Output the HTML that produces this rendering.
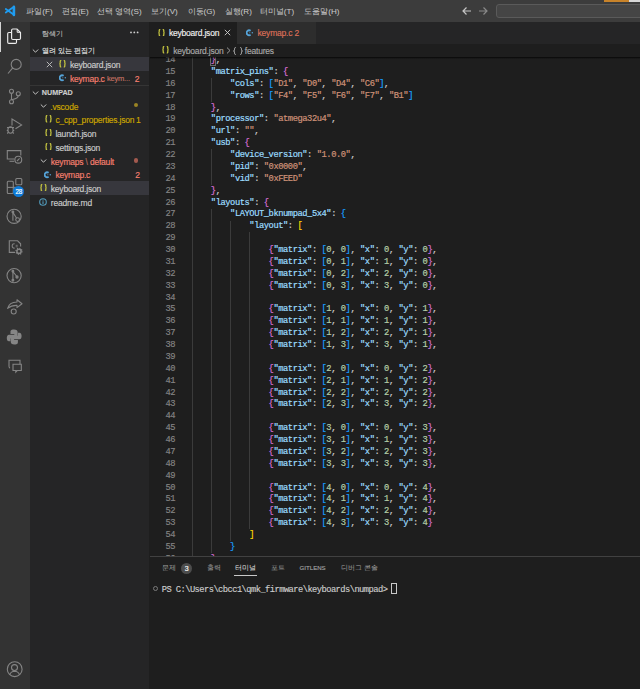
<!DOCTYPE html>
<html><head><meta charset="utf-8">
<style>
*{margin:0;padding:0;box-sizing:border-box}
html,body{width:640px;height:689px;overflow:hidden;background:#1e1e1e;font-family:"Liberation Sans",sans-serif;font-size:8px;color:#cccccc;-webkit-text-stroke-width:0.15px}
.a{position:absolute;white-space:pre}
#title{left:0;top:0;width:640px;height:22px;background:#3c3c3c}
.menu{top:0.5px;height:22px;line-height:22px;font-size:8.1px;color:#cccccc;-webkit-text-stroke-width:0}
.ko{-webkit-text-stroke-width:0}
#act{left:0;top:22px;width:30px;height:667px;background:#333333}
#side{left:30px;top:22px;width:119px;height:667px;background:#252526}
#tabs{left:150px;top:22px;width:490px;height:21.9px;background:#252526;font-size:8.5px;letter-spacing:-0.2px}
#editor{left:150px;top:56.8px;width:490px;height:499.5px;background:#1e1e1e;overflow:hidden}
.ln{position:absolute;left:0;height:11.875px;line-height:11.875px;width:490px;font-family:"Liberation Mono",monospace;font-size:8.75px;letter-spacing:-0.44px;white-space:pre}
.num{position:absolute;right:465px;top:0.8px;-webkit-text-stroke:0.15px currentColor;color:#858585;text-align:right}
.code{position:absolute;left:41.6px;top:0.8px;-webkit-text-stroke:0.2px currentColor}
.g{position:absolute;width:1px;background:#3b3b3b}
.bm{}
.row{position:absolute;left:0;width:119px;height:13.75px;line-height:16.1px;font-size:8.5px;letter-spacing:-0.2px}
.sel{background:#37373d}
#panel{left:150px;top:556.3px;width:490px;height:133px;background:#1e1e1e;border-top:1px solid #414141}
</style></head><body>
<div id="title" class="a">
  <svg class="a" style="left:0;top:0" width="22" height="22" viewBox="0 0 22 22" fill="none" stroke="#1f9cf0" stroke-linecap="round"><path d="M13.6 7 L5.8 12.5 M5.8 9 L13.6 14.6" stroke-width="1.8"/><path d="M13.9 6.9 V14.9" stroke-width="2.6"/></svg>
  <div class="a menu" style="left:26.3px">파일(F)</div>
  <div class="a menu" style="left:61.9px">편집(E)</div>
  <div class="a menu" style="left:96.6px">선택 영역(S)</div>
  <div class="a menu" style="left:151px">보기(V)</div>
  <div class="a menu" style="left:187.6px">이동(G)</div>
  <div class="a menu" style="left:224.6px">실행(R)</div>
  <div class="a menu" style="left:259.8px">터미널(T)</div>
  <div class="a menu" style="left:304.3px">도움말(H)</div>
  <svg class="a" style="left:460px;top:5px" width="30" height="12" viewBox="0 0 30 12">
    <path d="M3 6 H11 M6.5 2.5 L3 6 L6.5 9.5" stroke="#c5c5c5" stroke-width="1.2" fill="none"/>
    <path d="M19 6 H27 M23.5 2.5 L27 6 L23.5 9.5" stroke="#8a8a8a" stroke-width="1.2" fill="none"/>
  </svg>
  <div class="a" style="left:496px;top:4px;width:160px;height:14px;border:1px solid #5a5a5a;border-radius:3px;background:#454545"></div>
  <div class="a" style="left:604px;top:0;width:25px;height:1.5px;background:#c8832a"></div>
  <div class="a" style="left:629px;top:0;width:11px;height:1.5px;background:#d8d8d8"></div>
</div>

<div id="act" class="a">
  <div class="a" style="left:0;top:0;width:1.3px;height:30px;background:#d4d4d4"></div>
  <svg class="a" style="left:0;top:0" width="30" height="667" viewBox="0 22 30 667" fill="none" stroke="#858585" stroke-width="1.1">
    <!-- explorer -->
    <g stroke="#ececec" stroke-width="1.15">
      <path d="M12.8 29 H17 L20.5 32.5 V38.3 Q20.5 39.5 19.3 39.5 H12.8 Q11.6 39.5 11.6 38.3 V30.2 Q11.6 29 12.8 29 Z"/>
      <path d="M17.2 29.3 V32.3 H20.2" stroke-width="1"/>
      <path d="M11.6 32.5 H8.9 Q7.7 32.5 7.7 33.7 V42.2 Q7.7 43.4 8.9 43.4 H15.3 Q16.5 43.4 16.5 42.2 V39.5"/>
    </g>
    <!-- search -->
    <circle cx="16.2" cy="64.4" r="5"/>
    <path d="M12.7 67.9 L8 73.5"/>
    <!-- scm -->
    <circle cx="11.5" cy="91.2" r="2"/>
    <circle cx="18.3" cy="93.8" r="2"/>
    <circle cx="11.5" cy="101.7" r="2"/>
    <path d="M11.5 93.2 V99.7 M18.3 95.8 Q18.3 98.5 11.5 99.8"/>
    <!-- debug -->
    <path d="M12 125.5 V119 L21.6 124.9 L15.5 128.8"/>
    <ellipse cx="10.5" cy="130" rx="2.6" ry="3.2"/>
    <path d="M7 127.5 H14 M6.8 130.5 H8 M13 130.5 H14.2 M7.2 133.5 L8.2 132.5 M13.8 133.5 L12.8 132.5"/>
    <!-- remote -->
    <path d="M14.5 159 H7.3 V150.6 H20.8 V155.5"/>
    <path d="M9.5 161.3 H14.2"/>
    <circle cx="18.3" cy="159.7" r="3.4"/>
    <path d="M17 161 L19.6 158.4"/>
    <!-- extensions -->
    <rect x="15.8" y="178.5" width="6" height="6.2" rx="1"/>
    <rect x="7.3" y="181.3" width="6" height="12.2" rx="1"/>
    <path d="M7.3 187.4 H18"/>
    <!-- gitlens -->
    <circle cx="14.1" cy="216.3" r="7.1"/>
    <path d="M12.9 212 V220.8 M12.9 212.3 L16.6 218.2"/>
    <circle cx="12.9" cy="212" r="0.9" fill="#858585"/>
    <circle cx="17.6" cy="219.6" r="1.9"/>
    <!-- doc gear -->
    <path d="M20.6 246.5 V243.8 L17.6 240.8 H9.3 V252.4 H15"/>
    <path d="M14.6 243.7 Q12.2 243.5 12.2 245.9 Q12.2 248.3 14.6 248.1"/>
    <path d="M15.7 245.3 H17.7 M15.7 246.8 H17.7" stroke-width="0.8"/>
    <circle cx="19" cy="251.3" r="2.1" stroke-width="1.5"/>
    <circle cx="19" cy="251.3" r="3" stroke-width="1.2" stroke-dasharray="1.1 1.25"/>
    <!-- gitlens inspect -->
    <circle cx="14.1" cy="275.6" r="7.1"/>
    <path d="M12.9 271.2 V280.2 M12.9 271.5 L16.8 276.5"/>
    <circle cx="12.9" cy="271.2" r="0.9" fill="#858585"/>
    <circle cx="12.9" cy="280.3" r="0.9" fill="#858585"/>
    <circle cx="17" cy="277" r="1.1" fill="#858585"/>
    <!-- live share -->
    <path d="M7.6 308.3 Q9.2 302.2 17 302 V299.8 L22 303.8 L17 307.6 V305.4 Q11.5 305.2 7.6 308.3 Z" stroke-linejoin="round"/>
    <circle cx="13.7" cy="311.5" r="2.5"/>
    <!-- python -->
    <path d="M14 329.5 C10.5 329.5 10.5 331 10.5 332 V334 H14.3 V334.7 H9 C7.5 334.7 6.8 336 6.8 338 C6.8 340 7.5 341.3 9 341.3 H10.5 V339.5 C10.5 338.3 11.3 337.5 12.5 337.5 H16 C17 337.5 17.6 336.8 17.6 335.8 V332 C17.6 330.6 16.6 329.5 14 329.5 Z" fill="#858585" stroke="none"/>
    <path d="M14.4 344.5 C17.9 344.5 17.9 343 17.9 342 V340 H14.1 V339.3 H19.4 C20.9 339.3 21.6 338 21.6 336 C21.6 334 20.9 332.7 19.4 332.7 H17.9 V334.5 C17.9 335.7 17.1 336.5 15.9 336.5 H12.4 C11.4 336.5 10.8 337.2 10.8 338.2 V342 C10.8 343.4 11.8 344.5 14.4 344.5 Z" fill="#858585" stroke="none"/>
    <!-- chat -->
    <path d="M9 366.8 V360.3 H20 V364.3 M9 366.8 L9.8 368.3"/>
    <path d="M13 364.3 H21.3 V370.5 H17.2 L15.8 372 V370.5 H13 Z"/>
    <!-- account -->
    <circle cx="14.7" cy="669.2" r="7.4"/>
    <circle cx="14.5" cy="667.6" r="3"/>
    <path d="M9.6 674.8 Q11 671.3 14.6 671.2 Q18.2 671.3 19.6 674.8"/>
  </svg>
  <div class="a" style="left:13.1px;top:164.1px;width:11.4px;height:11.4px;border-radius:50%;background:#0e7bd8;color:#fff;font-size:6.3px;line-height:11.4px;text-align:center;letter-spacing:-0.2px">28</div>
</div>

<div id="side" class="a">
  <div class="a" style="left:11.8px;top:0.8px;height:22px;line-height:22px;font-size:7.4px;color:#c0c0c0;-webkit-text-stroke-width:0.1px">탐색기</div>
  <svg class="a" style="left:96px;top:8px" width="14" height="5" viewBox="126 30 14 5" fill="#d0d0d0"><circle cx="131" cy="32.4" r="0.9"/><circle cx="134.3" cy="32.4" r="0.9"/><circle cx="137.6" cy="32.4" r="0.9"/></svg>
  <div class="row" style="top:21.50px;font-weight:bold;color:#cccccc;letter-spacing:0;line-height:15px"><svg class="a" style="left:2px;top:4.10px" width="7" height="6" viewBox="0 0 7 6"><path d="M0.8 1.5 L3.5 4.2 L6.2 1.5" stroke="#c5c5c5" fill="none" stroke-width="1"/></svg><span class="a ko" style="left:11.8px;font-size:7.1px">열려 있는 편집기</span></div>
  <div class="row sel" style="top:35.25px"><svg class="a" style="left:16.1px;top:3.90px" width="7" height="7" viewBox="0 0 7 7" fill="none" stroke="#c5c5c5" stroke-width="0.9"><path d="M0.8 0.8 L6.2 6.2 M6.2 0.8 L0.8 6.2"/></svg><svg class="a" style="left:28.7px;top:2.75px" width="7" height="7.5" viewBox="0 0 7 7.5" fill="none" stroke="#cbcb41" stroke-width="1.2"><path d="M2.3 0.5 Q1.2 0.5 1.2 1.6 V2.7 Q1.2 3.75 0.4 3.75 Q1.2 3.75 1.2 4.8 V5.9 Q1.2 7 2.3 7 M4.7 0.5 Q5.8 0.5 5.8 1.6 V2.7 Q5.8 3.75 6.6 3.75 Q5.8 3.75 5.8 4.8 V5.9 Q5.8 7 4.7 7"/></svg><span class="a" style="left:39.9px;color:#cccccc">keyboard.json</span></div>
  <div class="row" style="top:49.00px"><svg class="a" style="left:28.8px;top:2.9px" width="8" height="8" viewBox="0 0 8 8" fill="#55a3d8" stroke="#55a3d8"><path d="M4.63 1.75 A2.5 2.5 0 1 0 4.63 5.85" stroke-width="1.8" fill="none"/><circle cx="3.8" cy="3.8" r="0.5" stroke="none"/><circle cx="6.3" cy="3.8" r="0.7" stroke="none"/></svg><span class="a" style="left:39.9px;color:#f88070">keymap.c</span><span class="a" style="left:77px;color:#c17163;font-size:7.5px">keym...</span><span class="a" style="left:104.7px;color:#f88070">2</span></div>
  <div class="row" style="top:62.75px;font-weight:bold;letter-spacing:0;line-height:14.8px;border-top:1px solid #353535"><svg class="a" style="left:2px;top:4.10px" width="7" height="6" viewBox="0 0 7 6"><path d="M0.8 1.5 L3.5 4.2 L6.2 1.5" stroke="#c5c5c5" fill="none" stroke-width="1"/></svg><span class="a" style="left:11.8px;color:#cccccc;font-size:7.2px">NUMPAD</span></div>
  <div class="row" style="top:76.50px"><svg class="a" style="left:10px;top:4.10px" width="7" height="6" viewBox="0 0 7 6"><path d="M0.8 1.5 L3.5 4.2 L6.2 1.5" stroke="#c5c5c5" fill="none" stroke-width="1"/></svg><span class="a" style="left:20.3px;color:#cca700">.vscode</span><span class="a" style="left:103.6px;top:4.30px;width:4.6px;height:4.6px;border-radius:50%;background:#9a8424"></span></div>
  <div class="row" style="top:90.25px"><svg class="a" style="left:14.8px;top:2.75px" width="7" height="7.5" viewBox="0 0 7 7.5" fill="none" stroke="#cbcb41" stroke-width="1.2"><path d="M2.3 0.5 Q1.2 0.5 1.2 1.6 V2.7 Q1.2 3.75 0.4 3.75 Q1.2 3.75 1.2 4.8 V5.9 Q1.2 7 2.3 7 M4.7 0.5 Q5.8 0.5 5.8 1.6 V2.7 Q5.8 3.75 6.6 3.75 Q5.8 3.75 5.8 4.8 V5.9 Q5.8 7 4.7 7"/></svg><span class="a" style="left:25.4px;color:#cca700">c_cpp_properties.json</span><span class="a" style="left:106px;color:#cca700">1</span></div>
  <div class="row" style="top:104.00px"><svg class="a" style="left:14.8px;top:2.75px" width="7" height="7.5" viewBox="0 0 7 7.5" fill="none" stroke="#cbcb41" stroke-width="1.2"><path d="M2.3 0.5 Q1.2 0.5 1.2 1.6 V2.7 Q1.2 3.75 0.4 3.75 Q1.2 3.75 1.2 4.8 V5.9 Q1.2 7 2.3 7 M4.7 0.5 Q5.8 0.5 5.8 1.6 V2.7 Q5.8 3.75 6.6 3.75 Q5.8 3.75 5.8 4.8 V5.9 Q5.8 7 4.7 7"/></svg><span class="a" style="left:25.4px;color:#cccccc">launch.json</span></div>
  <div class="row" style="top:117.75px"><svg class="a" style="left:14.8px;top:2.75px" width="7" height="7.5" viewBox="0 0 7 7.5" fill="none" stroke="#cbcb41" stroke-width="1.2"><path d="M2.3 0.5 Q1.2 0.5 1.2 1.6 V2.7 Q1.2 3.75 0.4 3.75 Q1.2 3.75 1.2 4.8 V5.9 Q1.2 7 2.3 7 M4.7 0.5 Q5.8 0.5 5.8 1.6 V2.7 Q5.8 3.75 6.6 3.75 Q5.8 3.75 5.8 4.8 V5.9 Q5.8 7 4.7 7"/></svg><span class="a" style="left:25.4px;color:#cccccc">settings.json</span></div>
  <div class="row" style="top:131.50px"><svg class="a" style="left:10px;top:4.10px" width="7" height="6" viewBox="0 0 7 6"><path d="M0.8 1.5 L3.5 4.2 L6.2 1.5" stroke="#c5c5c5" fill="none" stroke-width="1"/></svg><span class="a" style="left:20.75px;color:#f88070">keymaps<span style="color:#b86b60"> \ </span>default</span><span class="a" style="left:103.6px;top:4.50px;width:4.6px;height:4.6px;border-radius:50%;background:#a35a4f"></span></div>
  <div class="row" style="top:145.25px"><svg class="a" style="left:14.4px;top:3.65px" width="8" height="8" viewBox="0 0 8 8" fill="#55a3d8" stroke="#55a3d8"><path d="M4.63 1.75 A2.5 2.5 0 1 0 4.63 5.85" stroke-width="1.8" fill="none"/><circle cx="3.8" cy="3.8" r="0.5" stroke="none"/><circle cx="6.3" cy="3.8" r="0.7" stroke="none"/></svg><span class="a" style="left:25.4px;color:#f88070">keymap.c</span><span class="a" style="left:105.2px;color:#f88070">2</span></div>
  <div class="row sel" style="top:159.00px"><svg class="a" style="left:9.5px;top:2.75px" width="7" height="7.5" viewBox="0 0 7 7.5" fill="none" stroke="#cbcb41" stroke-width="1.2"><path d="M2.3 0.5 Q1.2 0.5 1.2 1.6 V2.7 Q1.2 3.75 0.4 3.75 Q1.2 3.75 1.2 4.8 V5.9 Q1.2 7 2.3 7 M4.7 0.5 Q5.8 0.5 5.8 1.6 V2.7 Q5.8 3.75 6.6 3.75 Q5.8 3.75 5.8 4.8 V5.9 Q5.8 7 4.7 7"/></svg><span class="a" style="left:20.75px;color:#cccccc">keyboard.json</span></div>
  <div class="row" style="top:172.75px"><svg class="a" style="left:8.5px;top:3.50px" width="8" height="8" viewBox="0 0 8 8"><circle cx="4" cy="4" r="3.3" fill="none" stroke="#519aba" stroke-width="1.1"/><path d="M4 3.3 V6" stroke="#519aba" stroke-width="1.1"/><circle cx="4" cy="2.1" r="0.6" fill="#519aba"/></svg><span class="a" style="left:20.75px;color:#cccccc">readme.md</span></div>
</div>

<div id="tabs" class="a">
  <div class="a" style="left:0;top:0;width:87px;height:21.9px;background:#1e1e1e"></div>
  <div class="a" style="left:87px;top:0;width:78.6px;height:21.9px;background:#2d2d2d"></div>
  <svg class="a" style="left:7.8px;top:6.7px" width="7" height="7.5" viewBox="0 0 7 7.5" fill="none" stroke="#cbcb41" stroke-width="1.2"><path d="M2.3 0.5 Q1.2 0.5 1.2 1.6 V2.7 Q1.2 3.75 0.4 3.75 Q1.2 3.75 1.2 4.8 V5.9 Q1.2 7 2.3 7 M4.7 0.5 Q5.8 0.5 5.8 1.6 V2.7 Q5.8 3.75 6.6 3.75 Q5.8 3.75 5.8 4.8 V5.9 Q5.8 7 4.7 7"/></svg>
  <span class="a" style="left:18.9px;top:0.7px;line-height:21.9px;color:#f0f0f0">keyboard.json</span>
  <svg class="a" style="left:74.3px;top:7.2px" width="7" height="7" viewBox="0 0 7 7" fill="none" stroke="#d0d0d0" stroke-width="0.9"><path d="M0.8 0.8 L6.2 6.2 M6.2 0.8 L0.8 6.2"/></svg>
  <svg class="a" style="left:96.1px;top:6.6px" width="8" height="8" viewBox="0 0 8 8" fill="#55a3d8" stroke="#55a3d8"><path d="M4.63 1.75 A2.5 2.5 0 1 0 4.63 5.85" stroke-width="1.8" fill="none"/><circle cx="3.8" cy="3.8" r="0.5" stroke="none"/><circle cx="6.3" cy="3.8" r="0.7" stroke="none"/></svg>
  <span class="a" style="left:107.5px;top:0.7px;line-height:21.9px;color:#dd7059">keymap.c 2</span>
</div>
<div class="a" style="left:150px;top:43.9px;width:490px;height:12.9px;background:#1e1e1e;font-size:8.5px;letter-spacing:-0.2px">
  <svg class="a" style="left:11.6px;top:2.3px" width="7" height="7.5" viewBox="0 0 7 7.5" fill="none" stroke="#cbcb41" stroke-width="1.2"><path d="M2.3 0.5 Q1.2 0.5 1.2 1.6 V2.7 Q1.2 3.75 0.4 3.75 Q1.2 3.75 1.2 4.8 V5.9 Q1.2 7 2.3 7 M4.7 0.5 Q5.8 0.5 5.8 1.6 V2.7 Q5.8 3.75 6.6 3.75 Q5.8 3.75 5.8 4.8 V5.9 Q5.8 7 4.7 7"/></svg>
  <span class="a" style="left:23.2px;top:1px;line-height:12.9px;color:#a9a9a9">keyboard.json</span>
  <svg class="a" style="left:76.3px;top:3.6px" width="5" height="7" viewBox="0 0 5 7"><path d="M1 0.6 L4 3.5 L1 6.4" fill="none" stroke="#a9a9a9" stroke-width="0.9"/></svg>
  <svg class="a" style="left:83.3px;top:2.7px" width="10" height="8" viewBox="0 0 10 8" fill="none" stroke="#b5b5b5" stroke-width="0.9"><path d="M2.8 0.5 Q1.5 0.5 1.5 1.8 V2.9 Q1.5 4 0.5 4 Q1.5 4 1.5 5.1 V6.2 Q1.5 7.5 2.8 7.5 M7.2 0.5 Q8.5 0.5 8.5 1.8 V2.9 Q8.5 4 9.5 4 Q8.5 4 8.5 5.1 V6.2 Q8.5 7.5 7.2 7.5"/></svg>
  <span class="a" style="left:94.8px;top:1px;line-height:12.9px;color:#a9a9a9">features</span>
</div>

<div id="editor" class="a">
<div class="g" style="left:41.60px;top:-14.38px;height:534.38px"></div>
<div class="g" style="left:60.84px;top:21.25px;height:23.75px"></div>
<div class="g" style="left:60.84px;top:92.50px;height:35.62px"></div>
<div class="g" style="left:60.84px;top:151.88px;height:344.37px"></div>
<div class="g" style="left:60.84px;top:-50.00px;height:47.50px"></div>
<div class="g" style="left:80.08px;top:163.75px;height:320.62px"></div>
<div class="g" style="left:99.32px;top:175.62px;height:296.87px"></div>
<div class="ln" style="top:-2.500px"><span class="num">14</span><span class="code">    <span class="bm"><span style="color:#da70d6">}</span></span><span style="color:#cccccc">,</span></span></div>
<div class="ln" style="top:9.375px"><span class="num">15</span><span class="code">    <span style="color:#9cdcfe">&quot;matrix_pins&quot;</span><span style="color:#cccccc">: </span><span style="color:#da70d6">{</span></span></div>
<div class="ln" style="top:21.250px"><span class="num">16</span><span class="code">        <span style="color:#9cdcfe">&quot;cols&quot;</span><span style="color:#cccccc">: </span><span style="color:#179fff">[</span><span style="color:#ce9178">&quot;D1&quot;</span><span style="color:#cccccc">, </span><span style="color:#ce9178">&quot;D0&quot;</span><span style="color:#cccccc">, </span><span style="color:#ce9178">&quot;D4&quot;</span><span style="color:#cccccc">, </span><span style="color:#ce9178">&quot;C6&quot;</span><span style="color:#179fff">]</span><span style="color:#cccccc">,</span></span></div>
<div class="ln" style="top:33.125px"><span class="num">17</span><span class="code">        <span style="color:#9cdcfe">&quot;rows&quot;</span><span style="color:#cccccc">: </span><span style="color:#179fff">[</span><span style="color:#ce9178">&quot;F4&quot;</span><span style="color:#cccccc">, </span><span style="color:#ce9178">&quot;F5&quot;</span><span style="color:#cccccc">, </span><span style="color:#ce9178">&quot;F6&quot;</span><span style="color:#cccccc">, </span><span style="color:#ce9178">&quot;F7&quot;</span><span style="color:#cccccc">, </span><span style="color:#ce9178">&quot;B1&quot;</span><span style="color:#179fff">]</span></span></div>
<div class="ln" style="top:45.000px"><span class="num">18</span><span class="code">    <span style="color:#da70d6">}</span><span style="color:#cccccc">,</span></span></div>
<div class="ln" style="top:56.875px"><span class="num">19</span><span class="code">    <span style="color:#9cdcfe">&quot;processor&quot;</span><span style="color:#cccccc">: </span><span style="color:#ce9178">&quot;atmega32u4&quot;</span><span style="color:#cccccc">,</span></span></div>
<div class="ln" style="top:68.750px"><span class="num">20</span><span class="code">    <span style="color:#9cdcfe">&quot;url&quot;</span><span style="color:#cccccc">: </span><span style="color:#ce9178">&quot;&quot;</span><span style="color:#cccccc">,</span></span></div>
<div class="ln" style="top:80.625px"><span class="num">21</span><span class="code">    <span style="color:#9cdcfe">&quot;usb&quot;</span><span style="color:#cccccc">: </span><span style="color:#da70d6">{</span></span></div>
<div class="ln" style="top:92.500px"><span class="num">22</span><span class="code">        <span style="color:#9cdcfe">&quot;device_version&quot;</span><span style="color:#cccccc">: </span><span style="color:#ce9178">&quot;1.0.0&quot;</span><span style="color:#cccccc">,</span></span></div>
<div class="ln" style="top:104.375px"><span class="num">23</span><span class="code">        <span style="color:#9cdcfe">&quot;pid&quot;</span><span style="color:#cccccc">: </span><span style="color:#ce9178">&quot;0x0000&quot;</span><span style="color:#cccccc">,</span></span></div>
<div class="ln" style="top:116.250px"><span class="num">24</span><span class="code">        <span style="color:#9cdcfe">&quot;vid&quot;</span><span style="color:#cccccc">: </span><span style="color:#ce9178">&quot;0xFEED&quot;</span></span></div>
<div class="ln" style="top:128.125px"><span class="num">25</span><span class="code">    <span style="color:#da70d6">}</span><span style="color:#cccccc">,</span></span></div>
<div class="ln" style="top:140.000px"><span class="num">26</span><span class="code">    <span style="color:#9cdcfe">&quot;layouts&quot;</span><span style="color:#cccccc">: </span><span style="color:#da70d6">{</span></span></div>
<div class="ln" style="top:151.875px"><span class="num">27</span><span class="code">        <span style="color:#9cdcfe">&quot;LAYOUT_bknumpad_5x4&quot;</span><span style="color:#cccccc">: </span><span style="color:#179fff">{</span></span></div>
<div class="ln" style="top:163.750px"><span class="num">28</span><span class="code">            <span style="color:#9cdcfe">&quot;layout&quot;</span><span style="color:#cccccc">: </span><span style="color:#ffd700">[</span></span></div>
<div class="ln" style="top:175.625px"><span class="num">29</span><span class="code"></span></div>
<div class="ln" style="top:187.500px"><span class="num">30</span><span class="code">                <span style="color:#da70d6">{</span><span style="color:#9cdcfe">&quot;matrix&quot;</span><span style="color:#cccccc">: </span><span style="color:#179fff">[</span><span style="color:#b5cea8">0</span><span style="color:#cccccc">, </span><span style="color:#b5cea8">0</span><span style="color:#179fff">]</span><span style="color:#cccccc">, </span><span style="color:#9cdcfe">&quot;x&quot;</span><span style="color:#cccccc">: </span><span style="color:#b5cea8">0</span><span style="color:#cccccc">, </span><span style="color:#9cdcfe">&quot;y&quot;</span><span style="color:#cccccc">: </span><span style="color:#b5cea8">0</span><span style="color:#da70d6">}</span><span style="color:#cccccc">,</span></span></div>
<div class="ln" style="top:199.375px"><span class="num">31</span><span class="code">                <span style="color:#da70d6">{</span><span style="color:#9cdcfe">&quot;matrix&quot;</span><span style="color:#cccccc">: </span><span style="color:#179fff">[</span><span style="color:#b5cea8">0</span><span style="color:#cccccc">, </span><span style="color:#b5cea8">1</span><span style="color:#179fff">]</span><span style="color:#cccccc">, </span><span style="color:#9cdcfe">&quot;x&quot;</span><span style="color:#cccccc">: </span><span style="color:#b5cea8">1</span><span style="color:#cccccc">, </span><span style="color:#9cdcfe">&quot;y&quot;</span><span style="color:#cccccc">: </span><span style="color:#b5cea8">0</span><span style="color:#da70d6">}</span><span style="color:#cccccc">,</span></span></div>
<div class="ln" style="top:211.250px"><span class="num">32</span><span class="code">                <span style="color:#da70d6">{</span><span style="color:#9cdcfe">&quot;matrix&quot;</span><span style="color:#cccccc">: </span><span style="color:#179fff">[</span><span style="color:#b5cea8">0</span><span style="color:#cccccc">, </span><span style="color:#b5cea8">2</span><span style="color:#179fff">]</span><span style="color:#cccccc">, </span><span style="color:#9cdcfe">&quot;x&quot;</span><span style="color:#cccccc">: </span><span style="color:#b5cea8">2</span><span style="color:#cccccc">, </span><span style="color:#9cdcfe">&quot;y&quot;</span><span style="color:#cccccc">: </span><span style="color:#b5cea8">0</span><span style="color:#da70d6">}</span><span style="color:#cccccc">,</span></span></div>
<div class="ln" style="top:223.125px"><span class="num">33</span><span class="code">                <span style="color:#da70d6">{</span><span style="color:#9cdcfe">&quot;matrix&quot;</span><span style="color:#cccccc">: </span><span style="color:#179fff">[</span><span style="color:#b5cea8">0</span><span style="color:#cccccc">, </span><span style="color:#b5cea8">3</span><span style="color:#179fff">]</span><span style="color:#cccccc">, </span><span style="color:#9cdcfe">&quot;x&quot;</span><span style="color:#cccccc">: </span><span style="color:#b5cea8">3</span><span style="color:#cccccc">, </span><span style="color:#9cdcfe">&quot;y&quot;</span><span style="color:#cccccc">: </span><span style="color:#b5cea8">0</span><span style="color:#da70d6">}</span><span style="color:#cccccc">,</span></span></div>
<div class="ln" style="top:235.000px"><span class="num">34</span><span class="code"></span></div>
<div class="ln" style="top:246.875px"><span class="num">35</span><span class="code">                <span style="color:#da70d6">{</span><span style="color:#9cdcfe">&quot;matrix&quot;</span><span style="color:#cccccc">: </span><span style="color:#179fff">[</span><span style="color:#b5cea8">1</span><span style="color:#cccccc">, </span><span style="color:#b5cea8">0</span><span style="color:#179fff">]</span><span style="color:#cccccc">, </span><span style="color:#9cdcfe">&quot;x&quot;</span><span style="color:#cccccc">: </span><span style="color:#b5cea8">0</span><span style="color:#cccccc">, </span><span style="color:#9cdcfe">&quot;y&quot;</span><span style="color:#cccccc">: </span><span style="color:#b5cea8">1</span><span style="color:#da70d6">}</span><span style="color:#cccccc">,</span></span></div>
<div class="ln" style="top:258.750px"><span class="num">36</span><span class="code">                <span style="color:#da70d6">{</span><span style="color:#9cdcfe">&quot;matrix&quot;</span><span style="color:#cccccc">: </span><span style="color:#179fff">[</span><span style="color:#b5cea8">1</span><span style="color:#cccccc">, </span><span style="color:#b5cea8">1</span><span style="color:#179fff">]</span><span style="color:#cccccc">, </span><span style="color:#9cdcfe">&quot;x&quot;</span><span style="color:#cccccc">: </span><span style="color:#b5cea8">1</span><span style="color:#cccccc">, </span><span style="color:#9cdcfe">&quot;y&quot;</span><span style="color:#cccccc">: </span><span style="color:#b5cea8">1</span><span style="color:#da70d6">}</span><span style="color:#cccccc">,</span></span></div>
<div class="ln" style="top:270.625px"><span class="num">37</span><span class="code">                <span style="color:#da70d6">{</span><span style="color:#9cdcfe">&quot;matrix&quot;</span><span style="color:#cccccc">: </span><span style="color:#179fff">[</span><span style="color:#b5cea8">1</span><span style="color:#cccccc">, </span><span style="color:#b5cea8">2</span><span style="color:#179fff">]</span><span style="color:#cccccc">, </span><span style="color:#9cdcfe">&quot;x&quot;</span><span style="color:#cccccc">: </span><span style="color:#b5cea8">2</span><span style="color:#cccccc">, </span><span style="color:#9cdcfe">&quot;y&quot;</span><span style="color:#cccccc">: </span><span style="color:#b5cea8">1</span><span style="color:#da70d6">}</span><span style="color:#cccccc">,</span></span></div>
<div class="ln" style="top:282.500px"><span class="num">38</span><span class="code">                <span style="color:#da70d6">{</span><span style="color:#9cdcfe">&quot;matrix&quot;</span><span style="color:#cccccc">: </span><span style="color:#179fff">[</span><span style="color:#b5cea8">1</span><span style="color:#cccccc">, </span><span style="color:#b5cea8">3</span><span style="color:#179fff">]</span><span style="color:#cccccc">, </span><span style="color:#9cdcfe">&quot;x&quot;</span><span style="color:#cccccc">: </span><span style="color:#b5cea8">3</span><span style="color:#cccccc">, </span><span style="color:#9cdcfe">&quot;y&quot;</span><span style="color:#cccccc">: </span><span style="color:#b5cea8">1</span><span style="color:#da70d6">}</span><span style="color:#cccccc">,</span></span></div>
<div class="ln" style="top:294.375px"><span class="num">39</span><span class="code"></span></div>
<div class="ln" style="top:306.250px"><span class="num">40</span><span class="code">                <span style="color:#da70d6">{</span><span style="color:#9cdcfe">&quot;matrix&quot;</span><span style="color:#cccccc">: </span><span style="color:#179fff">[</span><span style="color:#b5cea8">2</span><span style="color:#cccccc">, </span><span style="color:#b5cea8">0</span><span style="color:#179fff">]</span><span style="color:#cccccc">, </span><span style="color:#9cdcfe">&quot;x&quot;</span><span style="color:#cccccc">: </span><span style="color:#b5cea8">0</span><span style="color:#cccccc">, </span><span style="color:#9cdcfe">&quot;y&quot;</span><span style="color:#cccccc">: </span><span style="color:#b5cea8">2</span><span style="color:#da70d6">}</span><span style="color:#cccccc">,</span></span></div>
<div class="ln" style="top:318.125px"><span class="num">41</span><span class="code">                <span style="color:#da70d6">{</span><span style="color:#9cdcfe">&quot;matrix&quot;</span><span style="color:#cccccc">: </span><span style="color:#179fff">[</span><span style="color:#b5cea8">2</span><span style="color:#cccccc">, </span><span style="color:#b5cea8">1</span><span style="color:#179fff">]</span><span style="color:#cccccc">, </span><span style="color:#9cdcfe">&quot;x&quot;</span><span style="color:#cccccc">: </span><span style="color:#b5cea8">1</span><span style="color:#cccccc">, </span><span style="color:#9cdcfe">&quot;y&quot;</span><span style="color:#cccccc">: </span><span style="color:#b5cea8">2</span><span style="color:#da70d6">}</span><span style="color:#cccccc">,</span></span></div>
<div class="ln" style="top:330.000px"><span class="num">42</span><span class="code">                <span style="color:#da70d6">{</span><span style="color:#9cdcfe">&quot;matrix&quot;</span><span style="color:#cccccc">: </span><span style="color:#179fff">[</span><span style="color:#b5cea8">2</span><span style="color:#cccccc">, </span><span style="color:#b5cea8">2</span><span style="color:#179fff">]</span><span style="color:#cccccc">, </span><span style="color:#9cdcfe">&quot;x&quot;</span><span style="color:#cccccc">: </span><span style="color:#b5cea8">2</span><span style="color:#cccccc">, </span><span style="color:#9cdcfe">&quot;y&quot;</span><span style="color:#cccccc">: </span><span style="color:#b5cea8">2</span><span style="color:#da70d6">}</span><span style="color:#cccccc">,</span></span></div>
<div class="ln" style="top:341.875px"><span class="num">43</span><span class="code">                <span style="color:#da70d6">{</span><span style="color:#9cdcfe">&quot;matrix&quot;</span><span style="color:#cccccc">: </span><span style="color:#179fff">[</span><span style="color:#b5cea8">2</span><span style="color:#cccccc">, </span><span style="color:#b5cea8">3</span><span style="color:#179fff">]</span><span style="color:#cccccc">, </span><span style="color:#9cdcfe">&quot;x&quot;</span><span style="color:#cccccc">: </span><span style="color:#b5cea8">3</span><span style="color:#cccccc">, </span><span style="color:#9cdcfe">&quot;y&quot;</span><span style="color:#cccccc">: </span><span style="color:#b5cea8">2</span><span style="color:#da70d6">}</span><span style="color:#cccccc">,</span></span></div>
<div class="ln" style="top:353.750px"><span class="num">44</span><span class="code"></span></div>
<div class="ln" style="top:365.625px"><span class="num">45</span><span class="code">                <span style="color:#da70d6">{</span><span style="color:#9cdcfe">&quot;matrix&quot;</span><span style="color:#cccccc">: </span><span style="color:#179fff">[</span><span style="color:#b5cea8">3</span><span style="color:#cccccc">, </span><span style="color:#b5cea8">0</span><span style="color:#179fff">]</span><span style="color:#cccccc">, </span><span style="color:#9cdcfe">&quot;x&quot;</span><span style="color:#cccccc">: </span><span style="color:#b5cea8">0</span><span style="color:#cccccc">, </span><span style="color:#9cdcfe">&quot;y&quot;</span><span style="color:#cccccc">: </span><span style="color:#b5cea8">3</span><span style="color:#da70d6">}</span><span style="color:#cccccc">,</span></span></div>
<div class="ln" style="top:377.500px"><span class="num">46</span><span class="code">                <span style="color:#da70d6">{</span><span style="color:#9cdcfe">&quot;matrix&quot;</span><span style="color:#cccccc">: </span><span style="color:#179fff">[</span><span style="color:#b5cea8">3</span><span style="color:#cccccc">, </span><span style="color:#b5cea8">1</span><span style="color:#179fff">]</span><span style="color:#cccccc">, </span><span style="color:#9cdcfe">&quot;x&quot;</span><span style="color:#cccccc">: </span><span style="color:#b5cea8">1</span><span style="color:#cccccc">, </span><span style="color:#9cdcfe">&quot;y&quot;</span><span style="color:#cccccc">: </span><span style="color:#b5cea8">3</span><span style="color:#da70d6">}</span><span style="color:#cccccc">,</span></span></div>
<div class="ln" style="top:389.375px"><span class="num">47</span><span class="code">                <span style="color:#da70d6">{</span><span style="color:#9cdcfe">&quot;matrix&quot;</span><span style="color:#cccccc">: </span><span style="color:#179fff">[</span><span style="color:#b5cea8">3</span><span style="color:#cccccc">, </span><span style="color:#b5cea8">2</span><span style="color:#179fff">]</span><span style="color:#cccccc">, </span><span style="color:#9cdcfe">&quot;x&quot;</span><span style="color:#cccccc">: </span><span style="color:#b5cea8">2</span><span style="color:#cccccc">, </span><span style="color:#9cdcfe">&quot;y&quot;</span><span style="color:#cccccc">: </span><span style="color:#b5cea8">3</span><span style="color:#da70d6">}</span><span style="color:#cccccc">,</span></span></div>
<div class="ln" style="top:401.250px"><span class="num">48</span><span class="code">                <span style="color:#da70d6">{</span><span style="color:#9cdcfe">&quot;matrix&quot;</span><span style="color:#cccccc">: </span><span style="color:#179fff">[</span><span style="color:#b5cea8">3</span><span style="color:#cccccc">, </span><span style="color:#b5cea8">3</span><span style="color:#179fff">]</span><span style="color:#cccccc">, </span><span style="color:#9cdcfe">&quot;x&quot;</span><span style="color:#cccccc">: </span><span style="color:#b5cea8">3</span><span style="color:#cccccc">, </span><span style="color:#9cdcfe">&quot;y&quot;</span><span style="color:#cccccc">: </span><span style="color:#b5cea8">3</span><span style="color:#da70d6">}</span><span style="color:#cccccc">,</span></span></div>
<div class="ln" style="top:413.125px"><span class="num">49</span><span class="code"></span></div>
<div class="ln" style="top:425.000px"><span class="num">50</span><span class="code">                <span style="color:#da70d6">{</span><span style="color:#9cdcfe">&quot;matrix&quot;</span><span style="color:#cccccc">: </span><span style="color:#179fff">[</span><span style="color:#b5cea8">4</span><span style="color:#cccccc">, </span><span style="color:#b5cea8">0</span><span style="color:#179fff">]</span><span style="color:#cccccc">, </span><span style="color:#9cdcfe">&quot;x&quot;</span><span style="color:#cccccc">: </span><span style="color:#b5cea8">0</span><span style="color:#cccccc">, </span><span style="color:#9cdcfe">&quot;y&quot;</span><span style="color:#cccccc">: </span><span style="color:#b5cea8">4</span><span style="color:#da70d6">}</span><span style="color:#cccccc">,</span></span></div>
<div class="ln" style="top:436.875px"><span class="num">51</span><span class="code">                <span style="color:#da70d6">{</span><span style="color:#9cdcfe">&quot;matrix&quot;</span><span style="color:#cccccc">: </span><span style="color:#179fff">[</span><span style="color:#b5cea8">4</span><span style="color:#cccccc">, </span><span style="color:#b5cea8">1</span><span style="color:#179fff">]</span><span style="color:#cccccc">, </span><span style="color:#9cdcfe">&quot;x&quot;</span><span style="color:#cccccc">: </span><span style="color:#b5cea8">1</span><span style="color:#cccccc">, </span><span style="color:#9cdcfe">&quot;y&quot;</span><span style="color:#cccccc">: </span><span style="color:#b5cea8">4</span><span style="color:#da70d6">}</span><span style="color:#cccccc">,</span></span></div>
<div class="ln" style="top:448.750px"><span class="num">52</span><span class="code">                <span style="color:#da70d6">{</span><span style="color:#9cdcfe">&quot;matrix&quot;</span><span style="color:#cccccc">: </span><span style="color:#179fff">[</span><span style="color:#b5cea8">4</span><span style="color:#cccccc">, </span><span style="color:#b5cea8">2</span><span style="color:#179fff">]</span><span style="color:#cccccc">, </span><span style="color:#9cdcfe">&quot;x&quot;</span><span style="color:#cccccc">: </span><span style="color:#b5cea8">2</span><span style="color:#cccccc">, </span><span style="color:#9cdcfe">&quot;y&quot;</span><span style="color:#cccccc">: </span><span style="color:#b5cea8">4</span><span style="color:#da70d6">}</span><span style="color:#cccccc">,</span></span></div>
<div class="ln" style="top:460.625px"><span class="num">53</span><span class="code">                <span style="color:#da70d6">{</span><span style="color:#9cdcfe">&quot;matrix&quot;</span><span style="color:#cccccc">: </span><span style="color:#179fff">[</span><span style="color:#b5cea8">4</span><span style="color:#cccccc">, </span><span style="color:#b5cea8">3</span><span style="color:#179fff">]</span><span style="color:#cccccc">, </span><span style="color:#9cdcfe">&quot;x&quot;</span><span style="color:#cccccc">: </span><span style="color:#b5cea8">3</span><span style="color:#cccccc">, </span><span style="color:#9cdcfe">&quot;y&quot;</span><span style="color:#cccccc">: </span><span style="color:#b5cea8">4</span><span style="color:#da70d6">}</span></span></div>
<div class="ln" style="top:472.500px"><span class="num">54</span><span class="code">            <span style="color:#ffd700">]</span></span></div>
<div class="ln" style="top:484.375px"><span class="num">55</span><span class="code">        <span style="color:#179fff">}</span></span></div>
<div class="ln" style="top:496.250px"><span class="num">56</span><span class="code">    <span style="color:#da70d6">}</span></span></div>
<div class="a" style="left:60.3px;top:-2.5px;width:5.6px;height:11.9px;border:1px solid #6a6a6a"></div>
<div class="a" style="left:0;top:0;width:490px;height:2.5px;background:linear-gradient(rgba(0,0,0,0.75),rgba(0,0,0,0))"></div>
</div>

<div id="panel" class="a">
  <span class="a ko" style="left:12px;top:0;line-height:22px;color:#a0a0a0;font-size:7px">문제</span>
  <span class="a" style="left:31.2px;top:5.9px;width:11.2px;height:11.2px;border-radius:50%;background:#4d4d4d;color:#fff;font-size:7px;line-height:11.2px;text-align:center">3</span>
  <span class="a ko" style="left:57px;top:0;line-height:22px;color:#a0a0a0;font-size:7px">출력</span>
  <span class="a ko" style="left:85.2px;top:0;line-height:22px;color:#e7e7e7;font-size:7px">터미널</span>
  <div class="a" style="left:83.6px;top:17.6px;width:23px;height:1px;background:#c8c8c8"></div>
  <span class="a ko" style="left:121px;top:0;line-height:22px;color:#a0a0a0;font-size:7px">포트</span>
  <span class="a" style="left:149.6px;top:0;line-height:22px;color:#a0a0a0;font-size:6.1px">GITLENS</span>
  <span class="a ko" style="left:190.6px;top:0;line-height:22px;color:#a0a0a0;font-size:7px">디버그 콘솔</span>
  <span class="a" style="left:2.6px;top:28.5px;width:5px;height:5px;border:1px solid #7a7a7a;border-radius:50%"></span>
  <span class="a" style="left:11.7px;top:26.8px;line-height:12px;font-family:'Liberation Mono',monospace;font-size:8.75px;letter-spacing:-0.55px;color:#cccccc">PS C:\Users\cbcc1\qmk_firmware\keyboards\numpad&gt; </span>
  <div class="a" style="left:241.2px;top:25.8px;width:5.4px;height:10.8px;border:1px solid #c8c8c8"></div>
</div>
</body></html>
